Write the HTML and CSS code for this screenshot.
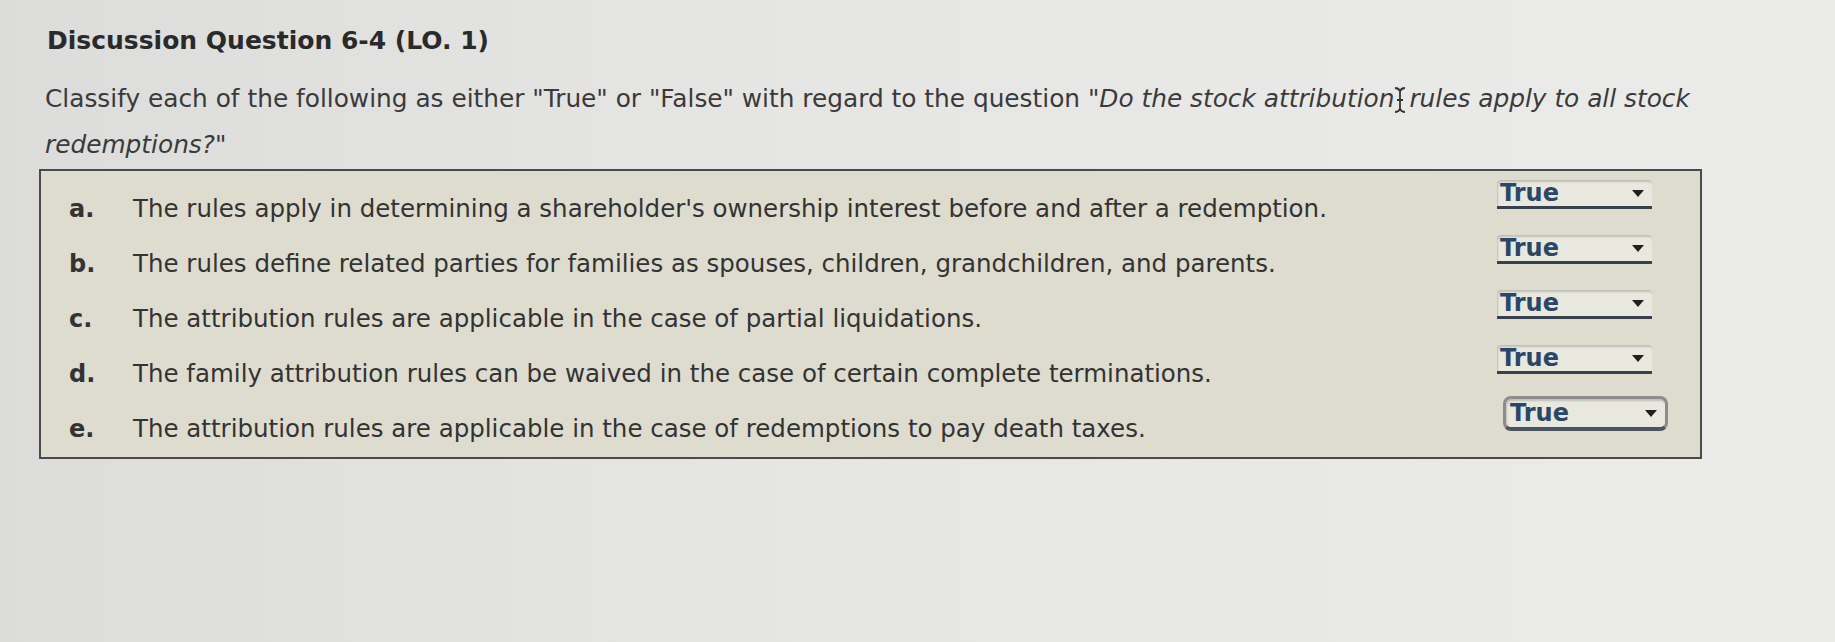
FILE: index.html
```html
<!DOCTYPE html>
<html>
<head>
<meta charset="utf-8">
<link rel="stylesheet" href="styles.css">
</head>
<body>
<div class="page">
  <h1 class="title">Discussion Question 6-4 (LO. 1)</h1>
  <p class="prompt"><span>Classify each of the following as either "True" or "False" with regard to the question </span><em>"Do the stock attribution</em><svg class="cursor" width="14" height="28" viewBox="0 0 14 28"><path d="M2 2 C5 2 6 3 7 5 C8 3 9 2 12 2 M7 5 V23 M2 26 C5 26 6 25 7 23 C8 25 9 26 12 26 M4 14 H10" fill="none" stroke="#333" stroke-width="1.8"/></svg><em>rules apply to all stock</em><br><em>redemptions?"</em></p>
  <div class="box">
    <div class="row">
      <span class="letter">a.</span>
      <span class="stmt">The rules apply in determining a shareholder's ownership interest before and after a redemption.</span>
      <span class="sel"><span class="val">True</span><span class="arrow"></span></span>
    </div>
    <div class="row">
      <span class="letter">b.</span>
      <span class="stmt">The rules define related parties for families as spouses, children, grandchildren, and parents.</span>
      <span class="sel"><span class="val">True</span><span class="arrow"></span></span>
    </div>
    <div class="row">
      <span class="letter">c.</span>
      <span class="stmt">The attribution rules are applicable in the case of partial liquidations.</span>
      <span class="sel"><span class="val">True</span><span class="arrow"></span></span>
    </div>
    <div class="row">
      <span class="letter">d.</span>
      <span class="stmt">The family attribution rules can be waived in the case of certain complete terminations.</span>
      <span class="sel"><span class="val">True</span><span class="arrow"></span></span>
    </div>
    <div class="row">
      <span class="letter">e.</span>
      <span class="stmt">The attribution rules are applicable in the case of redemptions to pay death taxes.</span>
      <span class="sel focus"><span class="val">True</span><span class="arrow"></span></span>
    </div>
  </div>
</div>
</body>
</html>
```
FILE: styles.css
```css
html, body {
  margin: 0;
  padding: 0;
}
body {
  width: 1835px;
  height: 642px;
  overflow: hidden;
  background: linear-gradient(90deg, #dcdcdb 0%, #e5e5e4 40%, #ebebea 100%);
  font-family: "DejaVu Sans", Verdana, sans-serif;
  color: #333;
}
.page {
  padding: 26px 0 0 39px;
  width: 1663px;
}
.title {
  margin: 0 0 0 8px;
  font-size: 25px;
  font-weight: bold;
  color: #2a2a2a;
  line-height: 30px;
}
.prompt {
  margin: 20px 0 0 6px;
  font-size: 24.8px;
  line-height: 46px;
  color: #3a3a3a;
  width: 1680px;
}
.prompt em {
  font-style: italic;
}
.cursor {
  display: inline-block;
  vertical-align: -7px;
  margin: 0 2px 0 -1px;
}
.box {
  margin-top: 1px;
  height: 290px;
  border: 2px solid #4a4a4a;
  background: #dddccf;
  padding: 10px 0 0 0;
  box-sizing: border-box;
  display: flex;
  flex-direction: column;
}
.row {
  display: flex;
  align-items: center;
  height: 55px;
  flex: none;
}
.letter {
  width: 92px;
  padding-left: 28px;
  box-sizing: border-box;
  font-weight: bold;
  font-size: 24px;
  color: #333;
}
.stmt {
  flex: 1;
  font-size: 24.5px;
  color: #333;
}
.sel {
  width: 155px;
  height: 29px;
  margin-right: 48px;
  margin-top: -28px;
  background: #e9e8df;
  border-bottom: 3px solid #36404f;
  border-radius: 4px 4px 0 0;
  box-shadow: inset 1px 2px 2px rgba(0, 0, 0, 0.18);
  display: flex;
  align-items: center;
  justify-content: space-between;
  padding: 0 8px 0 3px;
  box-sizing: border-box;
}
.sel.focus {
  width: 165px;
  height: 35px;
  border: 3px solid #8c8c8a;
  border-bottom: 4px solid #4a5463;
  border-radius: 8px;
  margin-right: 32px;
  margin-top: -30px;
  padding: 0 8px 0 4px;
}
.val {
  font-weight: bold;
  font-size: 24px;
  color: #2b4767;
}
.arrow {
  width: 0;
  height: 0;
  border-left: 6px solid transparent;
  border-right: 6px solid transparent;
  border-top: 7px solid #1f1f1f;
}
```
